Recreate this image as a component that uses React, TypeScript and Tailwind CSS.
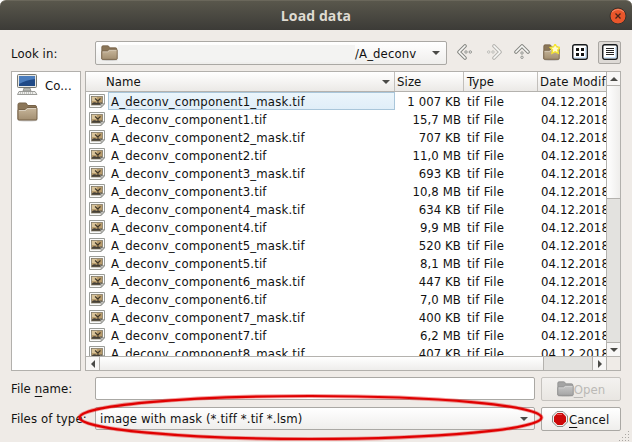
import React from 'react';

const files = [
  ['A_deconv_component1_mask.tif', '1 007 KB'],
  ['A_deconv_component1.tif', '15,7 MB'],
  ['A_deconv_component2_mask.tif', '707 KB'],
  ['A_deconv_component2.tif', '11,0 MB'],
  ['A_deconv_component3_mask.tif', '693 KB'],
  ['A_deconv_component3.tif', '10,8 MB'],
  ['A_deconv_component4_mask.tif', '634 KB'],
  ['A_deconv_component4.tif', '9,9 MB'],
  ['A_deconv_component5_mask.tif', '520 KB'],
  ['A_deconv_component5.tif', '8,1 MB'],
  ['A_deconv_component6_mask.tif', '447 KB'],
  ['A_deconv_component6.tif', '7,0 MB'],
  ['A_deconv_component7_mask.tif', '400 KB'],
  ['A_deconv_component7.tif', '6,2 MB'],
  ['A_deconv_component8_mask.tif', '407 KB'],
];

function Folder({ className = '', star = false, gray = false }: { className?: string; star?: boolean; gray?: boolean }) {
  const dark = gray ? '#8f8f8f' : '#766248';
  return (
    <svg viewBox="0 0 21 20" preserveAspectRatio="none" className={'shrink-0 ' + className}>
      <defs>
        <linearGradient id={gray ? 'fg' : 'fb'} x1="0" y1="0" x2="0" y2="1">
          <stop offset="0" stopColor={gray ? '#c9c9c9' : '#c8b79c'} />
          <stop offset="1" stopColor={gray ? '#a5a5a5' : '#a28e70'} />
        </linearGradient>
      </defs>
      <ellipse cx="10.5" cy="18.6" rx="10" ry="1" fill="#000" opacity=".18" />
      <path d="M1 17.5V2.5Q1 1 2.500 1H8.500Q9.500 1 10 2.200L10.500 3.500H18Q19.500 3.500 19.500 5V17.500Z" fill={gray ? '#a4a4a4' : '#8b7658'} stroke={dark} />
      <path d="M1 8.500Q1 7.500 2 7.500H8L10 5.500H19Q20 5.500 20 6.500V17Q20 18 19 18H2Q1 18 1 17Z" fill={gray ? 'url(#fg)' : 'url(#fb)'} stroke={dark} />
      <path d="M2 8.500H8.500L10.500 6.500H19" fill="none" stroke="#fff" opacity=".4" />
      {star && <path d="M15 0L17 3.500L21 4L18.200 7L19 11L15 9L11 11L11.800 7L9 4L13 3.500Z" fill="#fffbd0" stroke="#f6e62c" strokeWidth="1.600" />}
    </svg>
  );
}

function Computer() {
  return (
    <svg viewBox="0 0 21 22" className="h-[22px] w-[21px] shrink-0">
      <rect x=".5" y=".5" width="19" height="13" rx="1" fill="#e8e8e4" stroke="#777872" />
      <rect x="2" y="2" width="16" height="10" fill="#204a87" />
      <path d="M2 2H18V5Q9 6 2 10Z" fill="#4b7dbd" />
      <path d="M7 14H13L14 17H6Z" fill="#b9bab5" stroke="#777872" strokeWidth=".6" />
      <path d="M2 17.500H18L20 20.500H.500Z" fill="#eeeeec" stroke="#858781" strokeWidth=".8" />
      <path d="M3 19H17" stroke="#999b95" strokeDasharray="1 1" />
    </svg>
  );
}

function ImageIcon() {
  return (
    <svg viewBox="0 0 16 16" className="h-4 w-4 shrink-0">
      <path d="M.5 1.500H15.500V11L12 14.500H.5Z" fill="#fafaf9" stroke="#9b9d98" />
      <rect x="2.500" y="3.500" width="11" height="8.500" fill="#b89c6c" stroke="#77705f" strokeWidth=".7" />
      <path d="M3 4H8L7 8H3Z" fill="#d9c49a" />
      <path d="M3 10.500Q5 8.500 8 10L13 9.500V11.700H3Z" fill="#45413a" />
      <path d="M6 5.500L8.800 8L11.500 5.500M9 8V10.500" fill="none" stroke="#3e3628" strokeWidth="1.100" />
      <path d="M15.500 10.500Q13 11.500 11.500 10.500Q12.800 12.500 12 14.500Z" fill="#e4e4e2" stroke="#8a8c87" strokeWidth=".8" />
    </svg>
  );
}

function Arrow({ className = '', dim = false }: { className?: string; dim?: boolean }) {
  const color = dim ? '#b4b3af' : '#858681';
  return (
    <svg viewBox="0 0 16 16" className={'h-4 w-4 shrink-0 ' + className}>
      <path d="M8 2L2 8L8 14" fill="none" stroke={color} strokeWidth="3.600" strokeLinecap="round" strokeLinejoin="round" />
      <path d="M8 2L2 8L8 14" fill="none" stroke="#f8f8f6" strokeWidth="1.700" strokeLinecap="round" strokeLinejoin="round" />
      <circle cx="9" cy="8" r="1.200" fill="#f8f8f6" stroke={color} strokeWidth=".9" />
      <circle cx="13.300" cy="8" r="1.200" fill="#f8f8f6" stroke={color} strokeWidth=".9" />
    </svg>
  );
}

function Tri({ className = '' }: { className?: string }) {
  return (
    <svg viewBox="0 0 8 4" className={'h-1 w-2 shrink-0 ' + className}>
      <path d="M0 0H8L4 4Z" fill="#4a4a47" />
    </svg>
  );
}

function ViewIcon({ list = false }: { list?: boolean }) {
  return (
    <svg viewBox="0 0 16 16" className="h-4 w-4">
      <rect x=".75" y=".75" width="14.500" height="14.500" rx="2" fill="#fff" stroke="#171a1d" strokeWidth="1.400" />
      <path d="M2 13.700H14M13.800 3V14" stroke="#bfddfa" />
      {list ? <path d="M4 4.500H12M4 6.500H12M4 8.500H12M4 10.500H12" stroke="#222" />
        : <path d="M4 4h3v3H4zM9 4h3v3H9zM4 9h3v3H4zM9 9h3v3H9z" fill="#111" />}
    </svg>
  );
}

export default function App() {
  return (
    <div className="relative h-[442px] w-[632px] overflow-hidden bg-white font-['DejaVu_Sans_Condensed','DejaVu_Sans',sans-serif] text-[13px] leading-[18px] tracking-[0.1px] whitespace-nowrap text-[#111]">
      <div className="flex h-full flex-col rounded-t-[6px] bg-[#efebe7]">
        <header className="flex h-[30px] shrink-0 items-center rounded-t-[6px] border-t border-[#6a675b] bg-linear-to-b from-[#59574c] to-[#3c3b37]">
          <div className="w-[36px]" />
          <h1 className="flex-1 text-center font-['Open_Sans',sans-serif] text-[14px] font-bold text-[#dfdbd2]">Load data</h1>
          <div className="w-[36px] pl-[13px]">
            <svg viewBox="0 0 18 18" className="h-[18px] w-[18px]">
              <circle cx="9" cy="9" r="8" fill="#e9562b" stroke="#34332e" />
              <path d="M3 5Q9 0 15 5" fill="none" stroke="#f68b67" />
              <path d="M6.500 6.500L11.500 11.500M11.500 6.500L6.500 11.500" stroke="#4a2418" strokeWidth="1.300" />
            </svg>
          </div>
        </header>

        <div className="flex h-[41px] shrink-0 items-center pt-[5px] pl-[11px]">
          <span className="w-[84px] pt-[2px]">Look in:</span>
          <div className="flex h-6 w-[352px] items-center rounded-[2px] border border-[#aaa8a4] bg-linear-to-b from-white to-[#efeeec] pl-[5px]">
            <Folder className="h-4 w-[17px]" />
            <div className="h-[17px] w-[237px] bg-[#f3f3f2]" />
            <span className="pt-[2px]">/A_deconv</span>
            <Tri className="mr-[6px] ml-auto" />
          </div>
          <div className="mb-[2px] flex items-center">
            <Arrow className="ml-[10px]" />
            <Arrow className="ml-[13px] rotate-180" dim />
            <Arrow className="ml-[12px] rotate-90" />
            <Folder className="ml-[13px] h-[17px] w-[17px]" star />
            <div className="ml-[12px] flex w-4"><ViewIcon /></div>
            <div className="ml-[10px] flex h-[23px] w-[23px] items-center justify-center rounded-[2px] border border-[#aaa7a3] bg-[#dedad6]"><ViewIcon list /></div>
          </div>
        </div>

        <div className="flex h-[300px] shrink-0 gap-1 pl-[11px]">
          <aside className="w-[70px] border border-[#b2b0ac] bg-white pt-[2px] pl-[5px]">
            <div className="flex h-[24px] items-start gap-[7px]"><Computer /><span className="pt-[3px]">Co...</span></div>
            <div className="mt-[4px]"><Folder className="h-5 w-[21px]" /></div>
          </aside>
          <main className="flex w-[536px] flex-col border border-[#b2b0ac] bg-white">
            <div className="flex h-[284px]">
              <div className="flex w-[520px] flex-col overflow-hidden">
                <div className="flex h-5 shrink-0 items-center border-b border-[#b4b2ae] bg-linear-to-b from-white to-[#ebe9e6]">
                  <div className="flex h-full w-[309px] items-center border-r border-[#c2bfbb] pr-1 pl-5"><span>Name</span><Tri className="ml-auto" /></div>
                  <div className="h-full w-[69px] border-r border-[#c2bfbb] pt-px pl-[2px]">Size</div>
                  <div className="h-full w-[74px] border-r border-[#c2bfbb] pt-px pl-[3px]">Type</div>
                  <div className="w-[68px] overflow-hidden pl-[2px] tracking-[0.2px]">Date Modified</div>
                </div>
                {files.map(([name, size], i) => (
                  <div key={name} className="flex h-[18px] shrink-0 leading-[19px]">
                    <div className="w-[22px] pt-px pl-[3px]"><ImageIcon /></div>
                    <div className={'h-[18px] w-[287px] border pl-[2px] leading-[17px] tracking-[0.18px] ' + (i === 0 ? 'border-[#a9c6da] bg-linear-to-b from-[#ebf5fb] to-[#e0eef8]' : 'border-transparent')}>{name}</div>
                    <div className="w-[69px] pr-[3px] text-right">{size}</div>
                    <div className="w-[74px] pl-[3px] tracking-[0.25px]">tif File</div>
                    <div className="w-[68px] overflow-hidden pl-[3px]">04.12.2018</div>
                  </div>
                ))}
              </div>
              <div className="flex w-[14px] flex-col border-l border-[#b4b2ae] bg-[#e3e2df]">
                <div className="flex h-[14px] items-center justify-center border-b border-[#b4b2ae] bg-[#f8f7f6]"><Tri className="rotate-180" /></div>
                <div className="h-[113px] border-b border-[#b4b2ae] bg-linear-to-r from-white to-[#eeedeb]" />
                <div className="mt-auto flex h-[14px] items-center justify-center border-t border-[#b4b2ae] bg-[#f8f7f6]"><Tri /></div>
              </div>
            </div>
            <div className="flex h-[14px] border-t border-[#b4b2ae] bg-[#e3e2df]">
              <div className="flex w-[14px] items-center justify-center border-r border-[#b4b2ae] bg-[#f8f7f6]"><Tri className="rotate-90" /></div>
              <div className="w-[444px] border-r border-[#b4b2ae] bg-linear-to-b from-white to-[#eeedeb]" />
              <div className="ml-auto flex w-[14px] items-center justify-center border-l border-[#b4b2ae] bg-[#f8f7f6]"><Tri className="-rotate-90" /></div>
              <div className="w-[14px] border-l border-[#b4b2ae] bg-[#efebe7]" />
            </div>
          </main>
        </div>

        <div className="mt-[6px] flex h-6 shrink-0 items-center pl-[11px]">
          <span className="w-[84px]">File <span className="underline underline-offset-3">n</span>ame:</span>
          <div className="h-[23px] w-[440px] self-start rounded-[2px] border border-[#aaa8a4] bg-white" />
          <div className="ml-[6px] flex h-6 w-[80px] items-center justify-center rounded-[2px] border border-[#c5c2be] bg-linear-to-b from-[#f4f2f0] to-[#e9e6e2] text-[#bbb9b6]">
            <Folder className="h-4 w-[17px]" gray /><span className="pt-[2px]"><span className="underline underline-offset-3">O</span>pen</span>
          </div>
        </div>
        <div className="mt-[6px] flex h-6 shrink-0 items-center pl-[11px]">
          <span className="w-[84px]">Files of type:</span>
          <div className="flex h-[23px] w-[440px] items-center self-start rounded-[2px] border border-[#aaa8a4] bg-linear-to-b from-white to-[#efeeec] pl-1">
            <span className="tracking-[0.13px]">image with mask (*.tiff *.tif *.lsm)</span><Tri className="mr-[6px] ml-auto" />
          </div>
          <div className="ml-[6px] flex h-6 w-[80px] items-center rounded-[2px] border border-[#aaa8a4] bg-linear-to-b from-white to-[#efeeec] pl-[10px]">
            <svg viewBox="0 0 16 16" className="mr-[1px] h-4 w-4">
              <path d="M5 .5H11L15.500 5V11L11 15.500H5L.5 11V5Z" fill="#f2f2f0" stroke="#888a85" />
              <path d="M5.500 2H10.500L14 5.500V10.500L10.500 14H5.500L2 10.500V5.500Z" fill="#cc0808" />
              <path d="M5 3.500H10" stroke="#ea5757" />
            </svg>
            <span className="pt-[2px]"><span className="underline underline-offset-3">C</span>ancel</span>
          </div>
        </div>
      </div>
      <svg viewBox="0 0 632 442" className="pointer-events-none absolute inset-0 h-full w-full">
        <ellipse cx="310.500" cy="417.500" rx="231" ry="21.500" fill="none" stroke="#e30b0b" strokeOpacity=".4" strokeWidth="4" />
        <ellipse cx="310.500" cy="417.500" rx="231" ry="21.500" fill="none" stroke="#e00000" strokeWidth="2.200" />
        <path d="M628 431h1v1h-1zM625 434h1v1h-1zM628 434h1v1h-1zM622 437h1v1h-1zM625 437h1v1h-1zM628 437h1v1h-1zM619 440h1v1h-1zM622 440h1v1h-1zM625 440h1v1h-1zM628 440h1v1h-1z" fill="#aaa7a3" />
      </svg>
    </div>
  );
}
